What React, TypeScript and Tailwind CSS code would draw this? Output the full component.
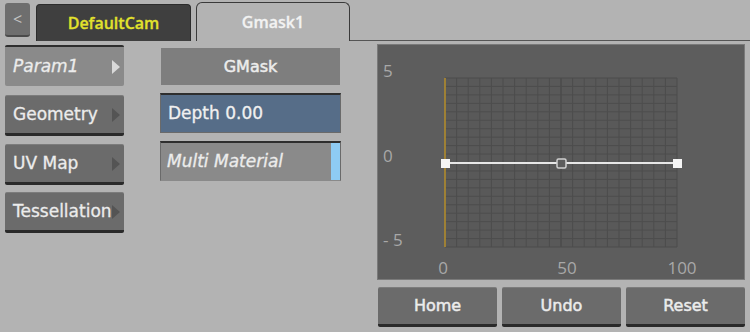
const font = { fontFamily: '"DejaVu Sans", "Open Sans", sans-serif' };
const bold = '"Open Sans", "DejaVu Sans", sans-serif';

function Arrow({ light }: { light?: boolean }) {
  return (
    <svg width="8" height="14" viewBox="0 0 8 14" className="absolute right-[4px] top-1/2 -translate-y-1/2">
      <polygon points="0,0 8,7 0,14" fill={light ? "#d9d9d9" : "#545454"} />
    </svg>
  );
}

function SideButton({ label, active, italic, cls }: { label: string; active?: boolean; italic?: boolean; cls?: string }) {
  return (
    <div
      className={`relative flex h-[41px] w-[119px] items-center overflow-hidden rounded-[2px] pl-[8px] text-[17px] text-[#ececec] [-webkit-text-stroke:0.3px_#ececec] ${
        active
          ? "border-t-[2px] border-[#2e2e2e] bg-[#8a8a8a]"
          : "border-b-[3px] border-t border-b-[#2a2a2a] border-t-[#7c7c7c] bg-[#6b6b6b]"
      } ${italic ? "italic" : ""} ${cls ?? ""}`}
    >
      <span className="whitespace-nowrap">{label}</span>
      <Arrow light={active} />
    </div>
  );
}

function BottomButton({ label }: { label: string }) {
  return (
    <div className="flex h-[40px] w-[119px] items-center justify-center rounded-[2px] border-b-[3px] border-t border-b-[#2a2a2a] border-t-[#7c7c7c] bg-[#6b6b6b] text-[16px] text-[#ececec] [-webkit-text-stroke:0.5px_#ececec]">
      {label}
    </div>
  );
}

function Graph() {
  const x0 = 68;
  const y0 = 34;
  const w = 232;
  const h = 169;
  const cols = Array.from({ length: 21 }, (_, i) => x0 + (w / 20) * i);
  const rows = Array.from({ length: 21 }, (_, i) => y0 + (h / 20) * i);
  return (
    <svg width="368" height="236" viewBox="0 0 368 236" className="block">
      <rect x="0" y="0" width="368" height="236" fill="#5d5d5d" />
      <rect x="0.5" y="0.5" width="367" height="235" fill="none" stroke="#7a7a7a" />
      <rect x={x0} y={y0} width={w} height={h} fill="#595959" rx="2" />
      {cols.map((x, i) => (
        <line key={"c" + i} x1={x} y1={y0} x2={x} y2={y0 + h} stroke={i === 10 ? "#444" : "#4d4d4d"} strokeWidth="1" />
      ))}
      {rows.map((y, i) => (
        <line key={"r" + i} x1={x0} y1={y} x2={x0 + w} y2={y} stroke="#4d4d4d" strokeWidth="1" />
      ))}
      <line x1={x0} y1={y0} x2={x0} y2={y0 + h} stroke="#b8902c" strokeWidth="1.5" />
      <line x1={x0} y1="119" x2={x0 + w} y2="119" stroke="#e8e8e8" strokeWidth="2" />
      <rect x={x0 - 4} y="115" width="9" height="9" fill="#f5f5f5" />
      <rect x={x0 + w - 4} y="115" width="9" height="9" fill="#f5f5f5" />
      <rect x={x0 + w / 2 - 4} y="115" width="9" height="9" fill="#5d5d5d" stroke="#d0d0d0" strokeWidth="1.5" rx="1.5" />
      <g fill="#a8a8a8" fontSize="17" fontFamily={bold}>
        <text x="6" y="33">5</text>
        <text x="6" y="118">0</text>
        <text x="6" y="202">- 5</text>
        <text x="66" y="230" textAnchor="middle">0</text>
        <text x="190" y="230" textAnchor="middle">50</text>
        <text x="305" y="230" textAnchor="middle">100</text>
      </g>
    </svg>
  );
}

export default function App() {
  return (
    <div className="h-[332px] w-[750px] overflow-hidden bg-[#b3b3b3]" style={font}>
      <div className="flex h-[41px] items-end" style={{ fontFamily: bold }}>
        <div className="mb-[4px] ml-[5px] flex h-[34px] w-[25px] items-center justify-center rounded-[3px] border-b-2 border-[#4a4a4a] bg-[#6e6e6e] text-[16px] text-[#c4c4c4]">
          &lt;
        </div>
        <div className="ml-[6px] flex h-[37px] w-[155px] items-center justify-center rounded-t-[4px] border border-b-0 border-[#2c2c2c] bg-[#3f3f3f] text-[16px] font-semibold text-[#e2e22c] [-webkit-text-stroke:0.3px_#e2e22c]">
          DefaultCam
        </div>
        <div className="ml-[5px] flex h-[39px] w-[154px] items-center justify-center rounded-t-[6px] border border-b-0 border-[#3a3a3a] bg-[#b3b3b3] text-[16px] font-semibold text-[#f2f2f2] [-webkit-text-stroke:0.3px_#f2f2f2]">
          Gmask1
        </div>
        <div className="h-px flex-1 bg-[#555]" />
      </div>

      <div className="flex">
        <div className="ml-[5px] mt-[4px] flex flex-col">
          <SideButton label="Param1" active italic />
          <SideButton label="Geometry" cls="mt-[9px] h-[40px]" />
          <SideButton label="UV Map" cls="mt-[8px] h-[40px]" />
          <SideButton label="Tessellation" cls="mt-[7px]" />
        </div>

        <div className="ml-[36px] mt-[7px] flex w-[181px] flex-col gap-[8px]">
          <div className="ml-px flex h-[37px] w-[179px] items-center justify-center bg-[#7e7e7e] text-[16px] text-[#ececec] [-webkit-text-stroke:0.5px_#ececec]">
            GMask
          </div>
          <div className="flex h-[40px] items-center border-x border-b border-t-[2px] border-x-[#6a6a6a] border-b-[#6a6a6a] border-t-[#2e2e2e] bg-[#566d88] pl-[7px] text-[17px] text-[#f0f0f0] [-webkit-text-stroke:0.3px_#f0f0f0]">
            Depth 0.00
          </div>
          <div className="flex h-[40px] items-stretch border-x border-b border-t-[2px] border-x-[#6a6a6a] border-b-[#8a8a8a] border-t-[#2e2e2e] bg-[#8a8a8a] text-[17px] italic text-[#ececec] [-webkit-text-stroke:0.3px_#ececec]">
            <div className="flex flex-1 items-center pl-[6px]">Multi Material</div>
            <div className="w-[9px] bg-[#8ecbf3]" />
          </div>
        </div>

        <div className="ml-[36px] mt-[3px] flex flex-col">
          <Graph />
          <div className="mt-[7px] flex gap-[5px] pl-px">
            <BottomButton label="Home" />
            <BottomButton label="Undo" />
            <BottomButton label="Reset" />
          </div>
        </div>
      </div>
    </div>
  );
}
